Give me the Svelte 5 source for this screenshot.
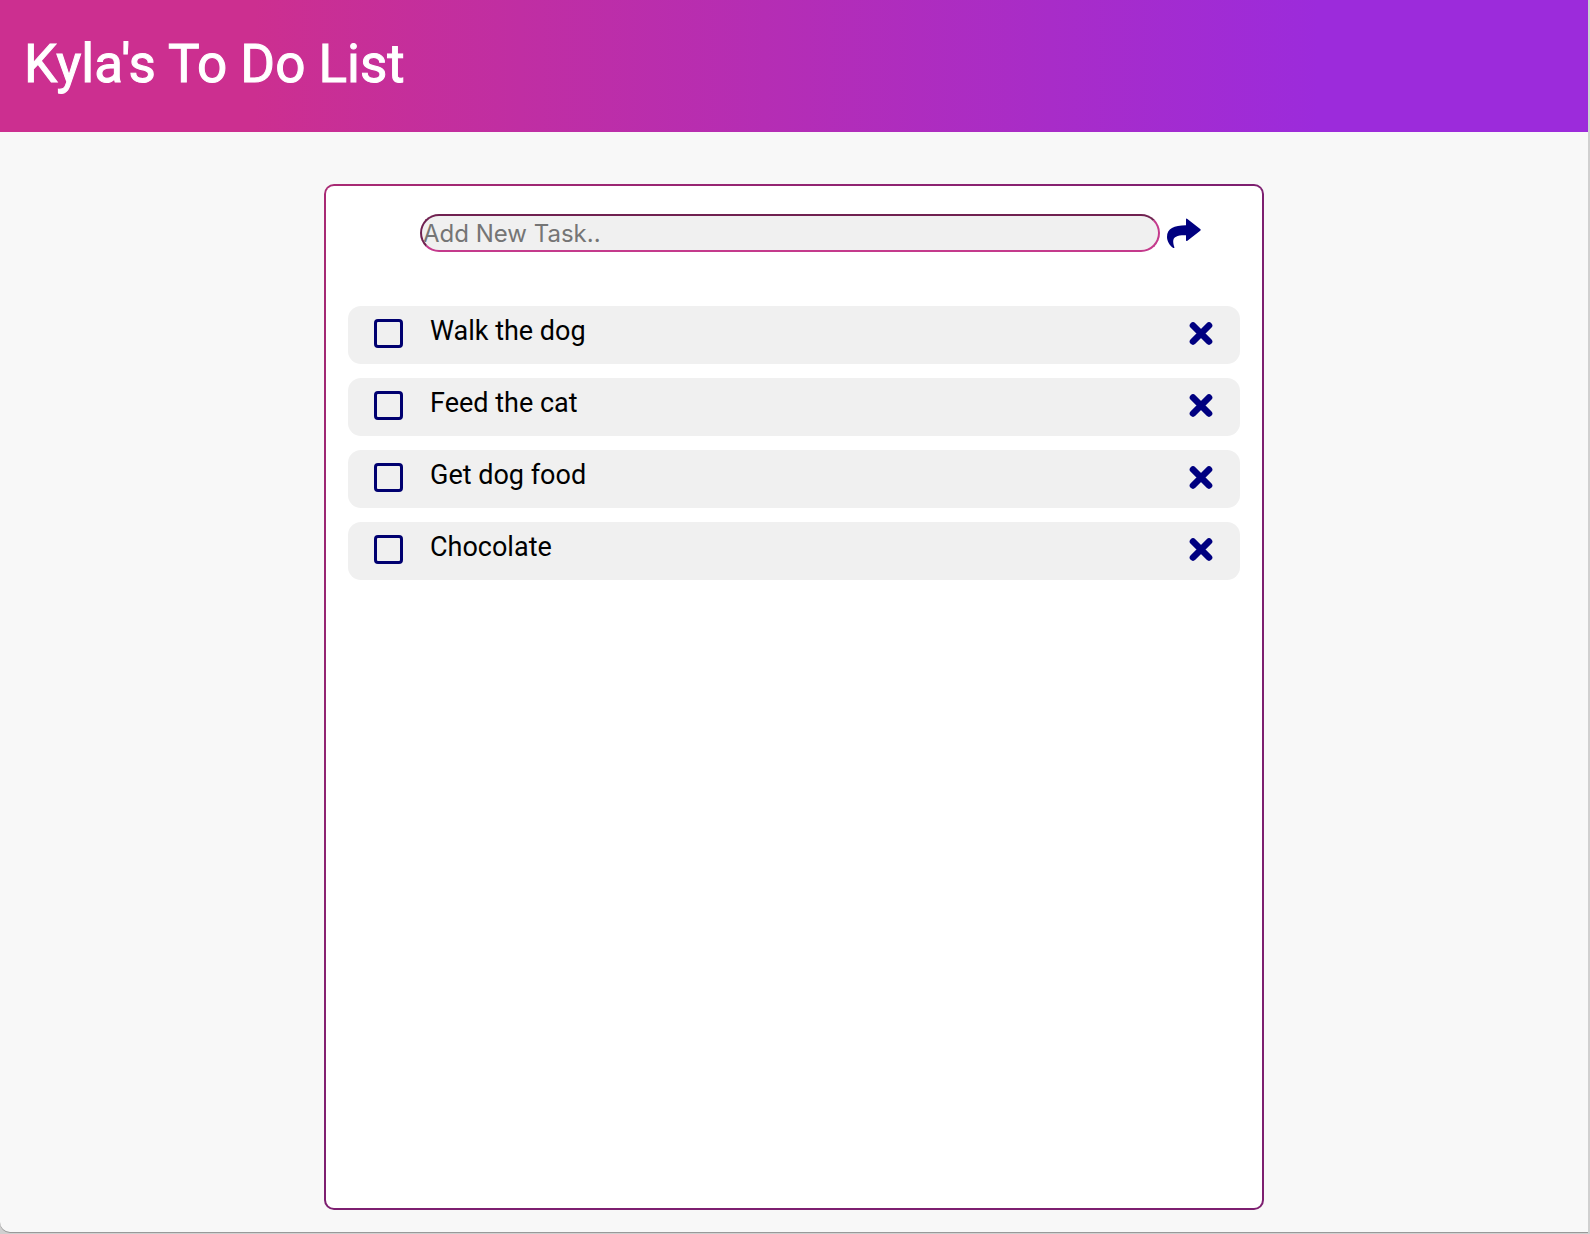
<script>
  let tasks = $state([
    { id: 1, text: 'Walk the dog', done: false },
    { id: 2, text: 'Feed the cat', done: false },
    { id: 3, text: 'Get dog food', done: false },
    { id: 4, text: 'Chocolate', done: false }
  ]);
  let draft = $state('');
  let nextId = 5;

  function add(event) {
    event.preventDefault();
    const text = draft.trim();
    if (!text) return;
    tasks.push({ id: nextId++, text, done: false });
    draft = '';
  }

  function remove(id) {
    tasks = tasks.filter((task) => task.id !== id);
  }
</script>

<div class="window">
  <div class="page">
    <header>
      <h1>Kyla's To Do List</h1>
    </header>
    <main>
      <div class="card">
        <div class="inner">
          <form onsubmit={add}>
            <input class="entry" type="text" placeholder="Add New Task.." aria-label="Add New Task" bind:value={draft} />
            <button type="submit" aria-label="Add task">
              <svg width="34" height="32" viewBox="0 -2 34 32" aria-hidden="true">
                <path d="M19 .6Q19-1 20.400-.1L33.200 9.900Q34.300 10.800 33.200 11.700L20.400 21.700Q19 22.700 19 21.100V16.200C10.500 16 6.200 17.500 6.200 22.500C6.200 24.600 6.800 26.600 7.400 28.200Q7.700 29.500 6.300 28.900C2.500 26.500 0 22 0 18C0 9.300 7 6.500 19 6.300Z" />
              </svg>
            </button>
          </form>
          <ul>
            {#each tasks as task (task.id)}
              <li>
                <input id="task-{task.id}" type="checkbox" bind:checked={task.done} />
                <label for="task-{task.id}">{task.text}</label>
                <button type="button" aria-label="Delete {task.text}" onclick={() => remove(task.id)}>
                  <svg width="24" height="24" viewBox="0 0 24 24" aria-hidden="true">
                    <path d="M4 4.500L20 20.500M20 4.500L4 20.500" fill="none" stroke="#000080" stroke-width="6.600" stroke-linecap="round" />
                  </svg>
                </button>
              </li>
            {/each}
          </ul>
        </div>
      </div>
    </main>
  </div>
</div>

<style>
  :global(body) {
    margin: 0;
    background: #d0d0d0;
    font-family: Roboto, 'Liberation Sans', sans-serif;
  }
  * {
    box-sizing: border-box;
  }
  .window {
    min-height: 100vh;
    display: flex;
    padding: 0 2px 2px 0;
  }
  .page {
    flex: 1;
    display: flex;
    flex-direction: column;
    background: #f8f8f8;
    border-bottom-left-radius: 10px;
    box-shadow: 0 1px 0 #999;
  }
  header {
    height: 132px;
    display: flex;
    align-items: center;
    padding: 0 24px 4px;
    background: linear-gradient(to right, #cc2f90 16%, #9c2bdb 83%);
  }
  h1 {
    margin: 0;
    color: #fff;
    font-size: 53px;
    font-weight: 400;
    line-height: 64px;
    -webkit-text-stroke: 1px #fff;
  }
  main {
    flex: 1;
    display: flex;
    justify-content: center;
    padding: 52px 24px 22px;
  }
  .card {
    width: 100%;
    max-width: 940px;
    display: flex;
    padding: 2px;
    border-radius: 10px;
    background: linear-gradient(to bottom right, #a92a74, #7d1f70 50%);
  }
  .inner {
    flex: 1;
    padding: 28px 22px;
    border-radius: 8px;
    background: #fff;
  }
  form {
    display: flex;
    align-items: center;
    gap: 7px;
    padding: 0 39px 0 72px;
  }
  .entry {
    flex: 1;
    min-width: 0;
    height: 38px;
    padding: 0 1px;
    border: 2px inset #c43a8c;
    border-radius: 20px;
    background: #f0f0f0;
    color: #000;
    font-family: Inter, Roboto, sans-serif;
    font-size: 24px;
  }
  .entry::placeholder {
    color: #757575;
    opacity: 1;
  }
  button {
    display: flex;
    padding: 0;
    border: 0;
    background: none;
    cursor: pointer;
  }
  svg {
    display: block;
    fill: #000080;
  }
  ul {
    display: flex;
    flex-direction: column;
    gap: 14px;
    margin: 54px 0 0;
    padding: 0;
    list-style: none;
  }
  li {
    display: flex;
    align-items: center;
    height: 58px;
    padding: 0 27px 4px 26px;
    border-radius: 13px;
    background: #f0f0f0;
  }
  li input {
    appearance: none;
    flex: none;
    width: 29px;
    height: 29px;
    margin: 0;
    border: 3px solid #000070;
    border-radius: 4px;
  }
  li input:checked {
    background: #000070;
  }
  label {
    flex: 1;
    padding: 0 27px 4px;
    color: #000;
    font-size: 27px;
    line-height: 32px;
  }
</style>
